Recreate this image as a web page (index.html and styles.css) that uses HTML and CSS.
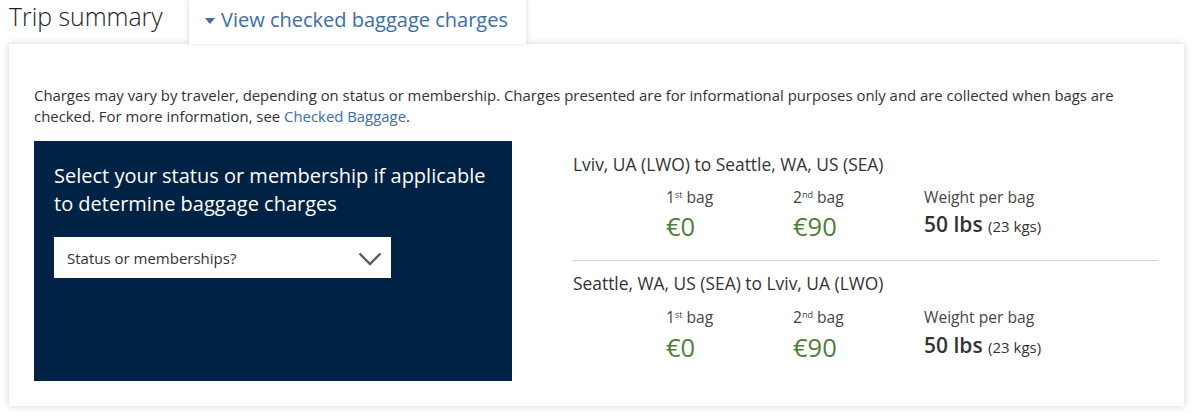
FILE: index.html
```html
<html>
<head>
<meta http-equiv="Content-Type" content="text/html; charset=utf-8">
<title>Trip summary - checked baggage</title>
<link rel="stylesheet" href="styles.css">
</head>
<body>
<div class="tabs">
  <div class="tab-plain">Trip summary</div>
  <div class="tab-active"><span class="caret"></span>View checked baggage charges</div>
</div>

<div class="card">
  <p class="note">Charges may vary by traveler, depending on status or membership. Charges presented are for informational purposes only and are collected when bags are checked. For more information, see <a href="#">Checked Baggage</a>.</p>

  <div class="body">
    <div class="panel">
      <h2>Select your status or membership if applicable to determine baggage charges</h2>
      <div class="select">
        <span>Status or memberships?</span>
        <svg width="24" height="14" viewBox="0 0 24 14"><path d="M1.5 1.5 L12 12 L22.5 1.5" fill="none" stroke="#5a5a5a" stroke-width="2.4"/></svg>
      </div>
    </div>

    <div class="routes">
      <div class="route">
        <div class="route-title">Lviv, UA (LWO) to Seattle, WA, US (SEA)</div>
        <div class="cols">
          <div class="col"><div class="lbl">1<sup>st</sup> bag</div><div class="price">€0</div></div>
          <div class="col"><div class="lbl">2<sup>nd</sup> bag</div><div class="price">€90</div></div>
          <div class="col"><div class="lbl">Weight per bag</div><div class="weight">50 lbs <small>(23 kgs)</small></div></div>
        </div>
      </div>
      <div class="route last">
        <div class="route-title">Seattle, WA, US (SEA) to Lviv, UA (LWO)</div>
        <div class="cols">
          <div class="col"><div class="lbl">1<sup>st</sup> bag</div><div class="price">€0</div></div>
          <div class="col"><div class="lbl">2<sup>nd</sup> bag</div><div class="price">€90</div></div>
          <div class="col"><div class="lbl">Weight per bag</div><div class="weight">50 lbs <small>(23 kgs)</small></div></div>
        </div>
      </div>
    </div>
  </div>
</div>
</body>
</html>
```

FILE: styles.css
```css
html, body {
  margin: 0;
  background: #fff;
  font-family: "Open Sans", "Liberation Sans", sans-serif;
  color: #333;
}

.tabs { display: flex; align-items: flex-end; height: 44px; padding-left: 9px; }
.tab-plain { font-size: 24.8px; font-weight: 300; line-height: 34px; padding-bottom: 11px; width: 180px; color: #222; }
.tab-active {
  position: relative; z-index: 1;
  background: #fff; height: 44px; box-sizing: border-box;
  padding: 3px 18px 0 16px;
  font-size: 20px; line-height: 34px; color: #3a6ea8;
  box-shadow: 0 -1px 6px rgba(0,0,0,.16);
}
.caret {
  display: inline-block; vertical-align: middle; margin: -2px 6px 0 0;
  border-left: 5.5px solid transparent; border-right: 5.5px solid transparent;
  border-top: 6px solid #3a6ea8;
}

.card {
  margin-left: 9px; width: 1175px; box-sizing: border-box;
  padding: 41px 26px 25px 25px;
  background: #fff;
  box-shadow: 0 0 7px rgba(0,0,0,.18);
}
.note { margin: 0; font-size: 14.9px; line-height: 21px; }
.note a { color: #3a6ea8; text-decoration: none; }

.body { display: flex; margin-top: 14px; gap: 61px; }
.panel { width: 478px; height: 240px; box-sizing: border-box; background: #002244; padding: 21px 20px; }
.panel h2 { margin: 0; font-size: 20px; font-weight: 400; line-height: 28px; color: #fff; }
.select {
  margin-top: 19px; width: 337px; height: 41px; box-sizing: border-box;
  background: #fff; display: flex; align-items: center; justify-content: space-between;
  padding: 0 9px 0 13px; font-size: 15px; color: #333;
}
.select svg { margin-top: 2px; }

.routes { flex: 1; padding-top: 12px; }
.route { padding-bottom: 19px; border-bottom: 1px solid #d0d0d0; }
.route.last { border-bottom: none; padding-top: 11px; }
.route-title { font-size: 17.4px; line-height: 22px; }
.cols { display: flex; margin-top: 12px; padding-left: 93px; }
.last .cols { margin-top: 13px; }
.col { width: 127px; }
.col:nth-child(2) { width: 131px; }
.lbl { font-size: 15.6px; line-height: 20px; color: #444; }
.lbl sup { font-size: 9px; vertical-align: 5px; line-height: 0; }
.price { font-size: 25.5px; line-height: 30px; color: #4e7d3b; margin-top: 4px; }
.last .price { margin-top: 5px; }
.weight { font-size: 21px; font-weight: 600; line-height: 30px; margin-top: 2px; color: #333; }
.last .weight { margin-top: 3px; }
.weight small { font-size: 15px; font-weight: 400; }
```
